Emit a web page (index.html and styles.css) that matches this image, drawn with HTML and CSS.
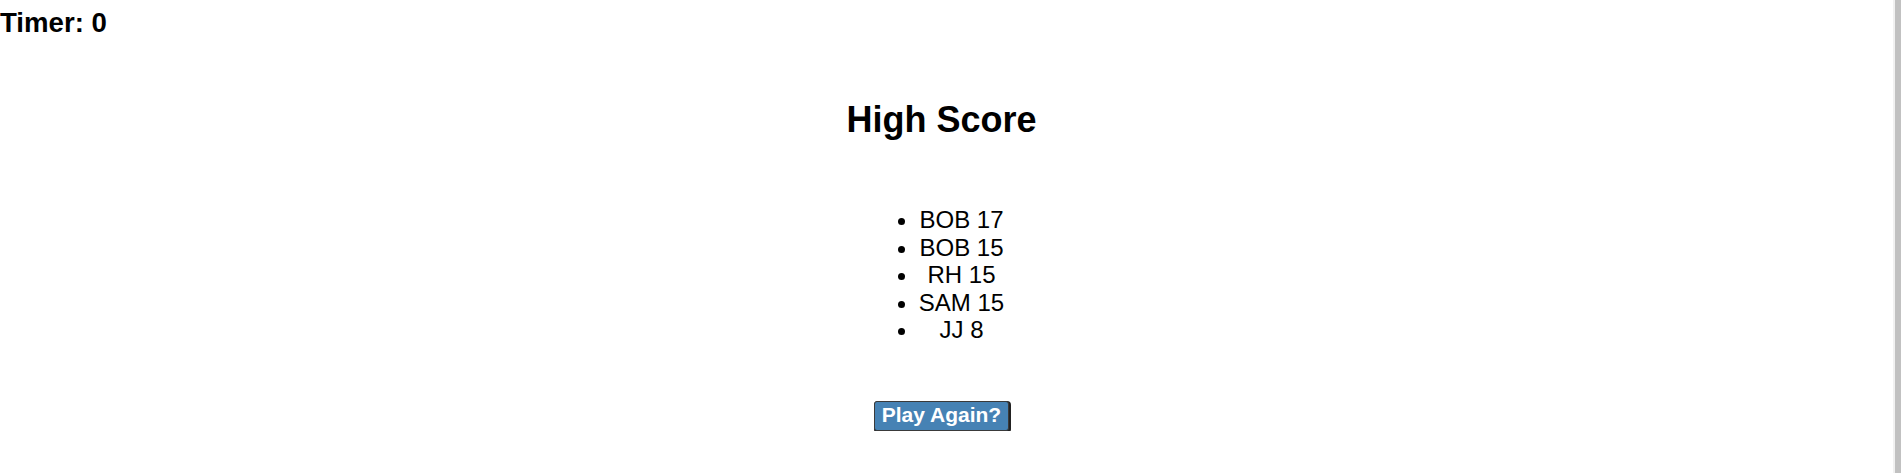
FILE: index.html
```html
<!DOCTYPE html>
<html lang="en">
<head>
<meta charset="utf-8">
<title>High Score</title>
<link rel="stylesheet" href="styles.css">
</head>
<body>
<div class="page">
  <h2 class="timer">Timer: 0</h2>
  <h1 class="title">High Score</h1>
  <ul class="scores">
    <li>BOB 17</li>
    <li>BOB 15</li>
    <li>RH 15</li>
    <li>SAM 15</li>
    <li>JJ 8</li>
  </ul>
  <div class="actions">
    <button class="play-btn">Play Again?</button>
  </div>
</div>
<div class="scrollbar"><div class="scrollbar-thumb"></div></div>
</body>
</html>
```

FILE: styles.css
```css
html, body {
  margin: 0;
  padding: 0;
  background: #ffffff;
}

body {
  font-family: "Liberation Sans", Arial, sans-serif;
  color: #000000;
  overflow: hidden;
}

.page {
  padding-right: 18px;
  display: flex;
  flex-direction: column;
}

.timer {
  margin: 0;
  padding-top: 7px;
  font-size: 27.6px;
  line-height: 31px;
  font-weight: bold;
}

.title {
  margin: 61px 0 0;
  font-size: 36px;
  line-height: 41px;
  font-weight: bold;
  text-align: center;
}

.scores {
  align-self: center;
  margin: 66px 0 0;
  padding-left: 40px;
  font-size: 24px;
  line-height: 27.6px;
  list-style: disc outside;
}

.scores li {
  text-align: center;
}

.actions {
  margin-top: 57px;
  text-align: center;
}

.play-btn {
  font-family: "Liberation Sans", Arial, sans-serif;
  font-size: 21px;
  font-weight: bold;
  line-height: 24px;
  color: #ffffff;
  background: #4682b4;
  border: 1px solid #3a3a3a;
  border-radius: 3px;
  box-shadow: 1px 1px 0 1px #222222;
  padding: 1px 7px 3px;
}

.scrollbar {
  position: fixed;
  top: 0;
  right: 0;
  bottom: 0;
  width: 8px;
  background: #f1f1f1;
}

.scrollbar-thumb {
  margin-left: 2px;
  height: 100%;
  background: #c1c1c1;
}
```
